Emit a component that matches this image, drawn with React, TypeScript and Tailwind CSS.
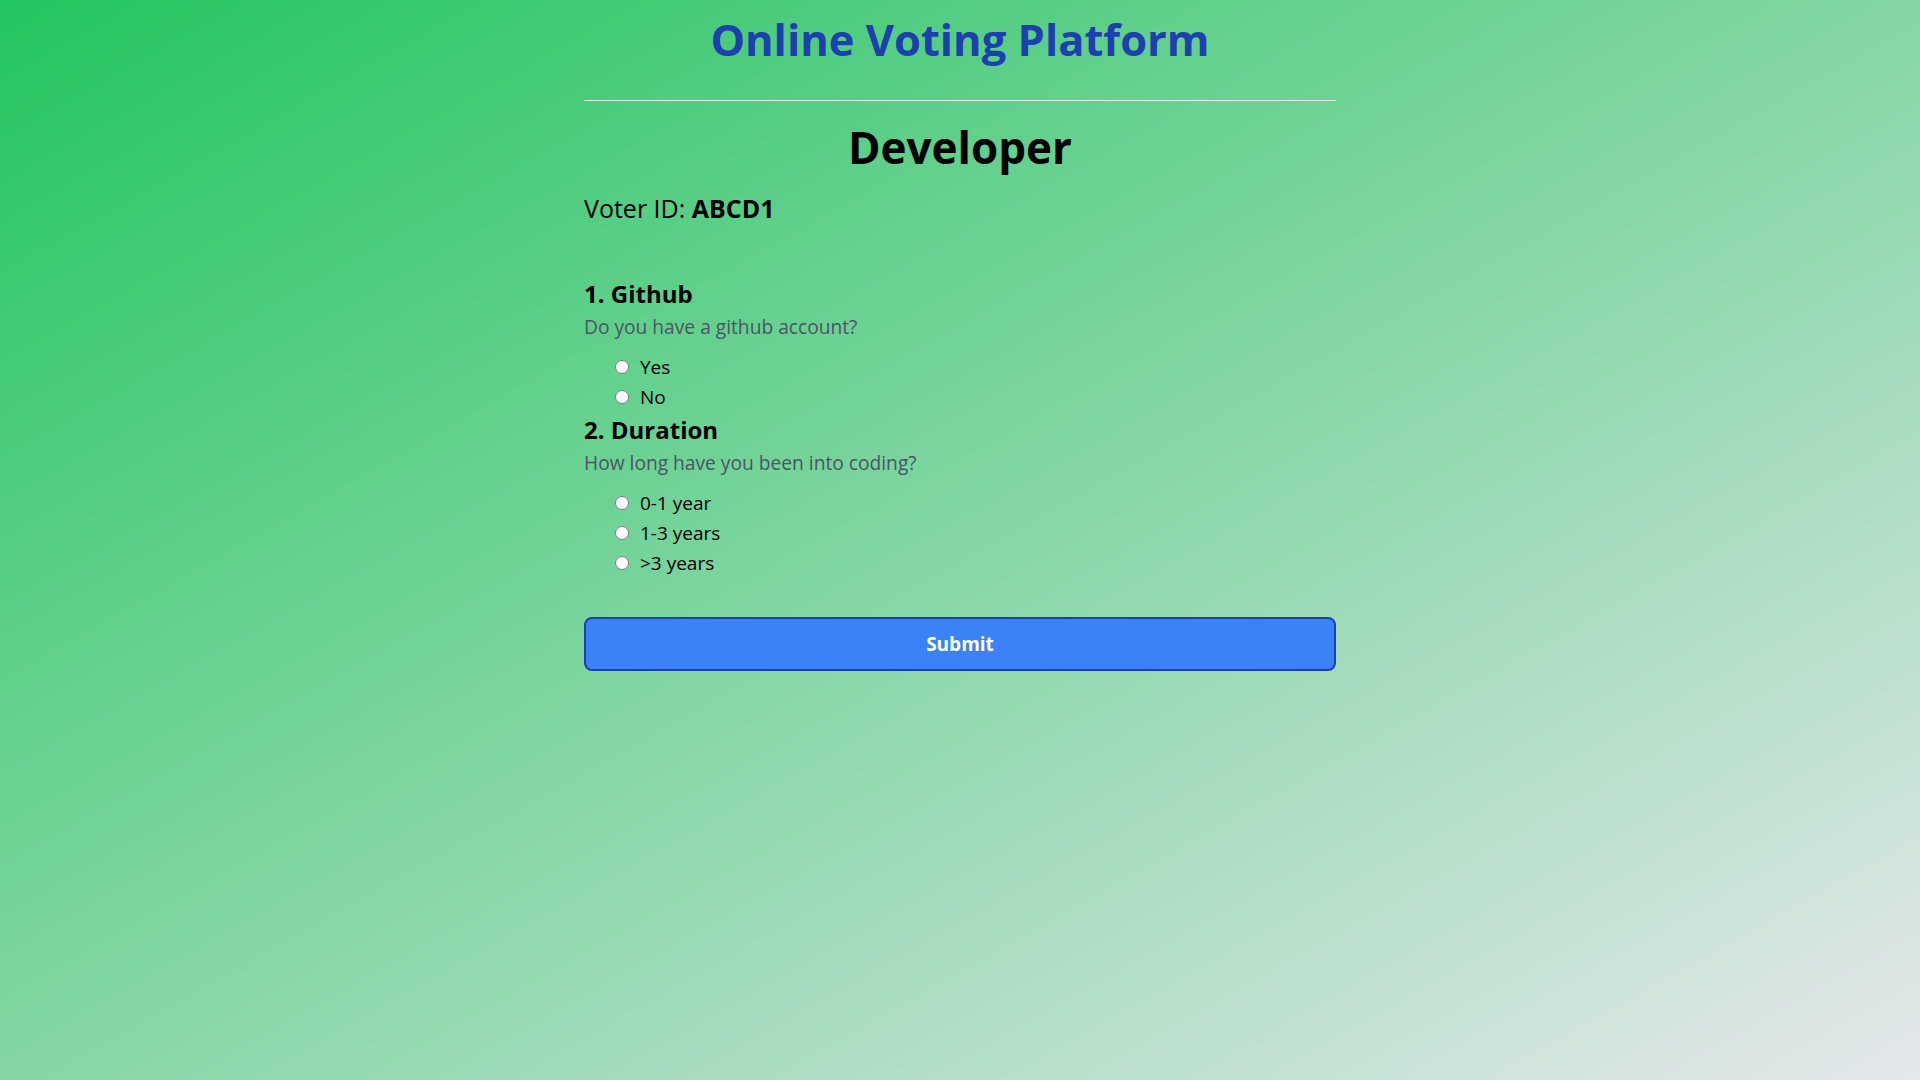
import React from "react";

const font = { fontFamily: '"Open Sans", "Noto Sans", sans-serif' };

function Option({ name, label }: { name: string; label: string }) {
  return (
    <label className="flex items-center h-[30px] ml-[31px] text-[19px] text-black">
      <input type="radio" name={name} className="w-[14px] h-[14px] m-0 mr-[11px]" />
      <span>{label}</span>
    </label>
  );
}

export default function App() {
  return (
    <div
      className="min-h-screen w-full bg-[linear-gradient(to_bottom_right,#22c55e,#e5e7eb)]"
      style={font}
    >
      <div className="max-w-[752px] mx-auto flex flex-col">
        <h1 className="mt-4 text-center text-[43.5px] leading-[48px] font-bold text-[#1e40af]">
          Online Voting Platform
        </h1>
        <hr className="mt-[36px] border-0 border-t border-gray-200" />
        <h2 className="mt-[22px] text-center text-[44px] leading-[48px] font-bold text-black">
          Developer
        </h2>
        <p className="mt-[21px] text-[25px] leading-[32px] text-black">
          Voter ID: <span className="font-bold">ABCD1</span>
        </p>

        <h3 className="mt-[54px] text-[24px] leading-[32px] font-bold text-black">1. Github</h3>
        <p className="mt-[3px] text-[19.2px] leading-[28px] text-gray-600">Do you have a github account?</p>
        <div className="mt-[11px] flex flex-col">
          <Option name="q1" label="Yes" />
          <Option name="q1" label="No" />
        </div>

        <h3 className="mt-[2px] text-[24px] leading-[32px] font-bold text-black">2. Duration</h3>
        <p className="mt-[3px] text-[19.2px] leading-[28px] text-gray-600">How long have you been into coding?</p>
        <div className="mt-[11px] flex flex-col">
          <Option name="q2" label="0-1 year" />
          <Option name="q2" label="1-3 years" />
          <Option name="q2" label=">3 years" />
        </div>

        <button
          type="button"
          className="mt-[39px] h-[54px] w-full rounded-lg border-2 border-[#1e40af] bg-[#3b82f6] text-white text-[19px] font-bold"
        >
          Submit
        </button>
      </div>
    </div>
  );
}
